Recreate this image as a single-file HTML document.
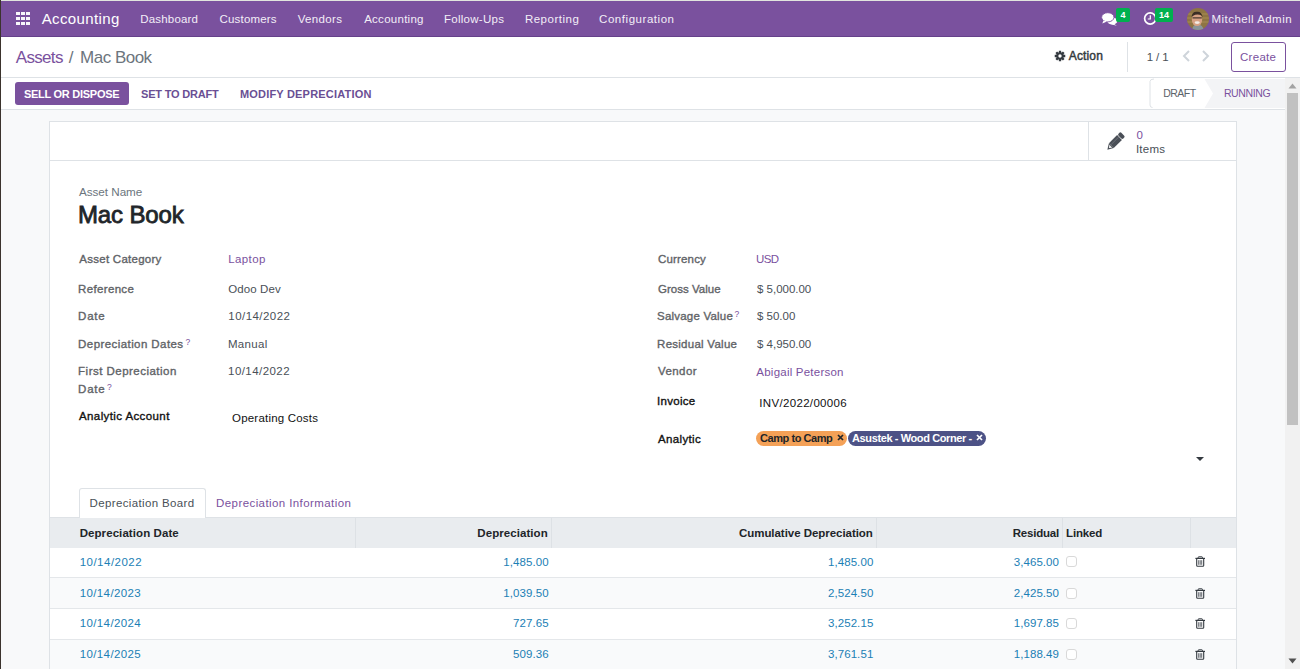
<!DOCTYPE html>
<html><head><meta charset="utf-8"><title>Mac Book - Odoo</title>
<style>
html,body{margin:0;padding:0;width:1300px;height:669px;overflow:hidden;background:#fff;}
body{position:relative;font-family:'Liberation Sans', sans-serif;}
.r,.t{position:absolute;}
.t{white-space:nowrap;}
sup{font-size:8.5px;color:#7a519e;vertical-align:top;position:relative;top:-2.5px;font-weight:400;}
.badge{background:#00b04f;color:#fff;font:700 9px/14px 'Liberation Sans', sans-serif;text-align:center;border-radius:2px;}
.tag{border-radius:8px;}
</style></head><body>
<div class="r" style="left:0px;top:0px;width:1300px;height:1px;background:#e1e4de;"></div>
<div class="r" style="left:1px;top:1px;width:1299px;height:35px;background:#7a519e;"></div>
<div class="r" style="left:1px;top:36px;width:1299px;height:1px;background:#65418a;"></div>
<div class="r" style="left:1px;top:37px;width:1299px;height:40px;background:#ffffff;"></div>
<div class="r" style="left:1px;top:77px;width:1299px;height:1px;background:#dee2e6;"></div>
<div class="r" style="left:1px;top:78px;width:1284px;height:31px;background:#ffffff;"></div>
<div class="r" style="left:1px;top:109px;width:1284px;height:1px;background:#dee2e6;"></div>
<div class="r" style="left:1px;top:110px;width:1284px;height:559px;background:#f8f9fa;"></div>
<div class="r" style="left:0px;top:0px;width:1px;height:669px;background:#3b332d;"></div>
<div class="r" style="left:16px;top:12px;width:4px;height:3.4000000000000004px;background:#ffffff;opacity:0.95"></div>
<div class="r" style="left:21px;top:12px;width:4px;height:3.4000000000000004px;background:#ffffff;opacity:0.95"></div>
<div class="r" style="left:26px;top:12px;width:4px;height:3.4000000000000004px;background:#ffffff;opacity:0.95"></div>
<div class="r" style="left:16px;top:17px;width:4px;height:3.3999999999999986px;background:#ffffff;opacity:0.95"></div>
<div class="r" style="left:21px;top:17px;width:4px;height:3.3999999999999986px;background:#ffffff;opacity:0.95"></div>
<div class="r" style="left:26px;top:17px;width:4px;height:3.3999999999999986px;background:#ffffff;opacity:0.95"></div>
<div class="r" style="left:16px;top:22px;width:4px;height:3.3999999999999986px;background:#ffffff;opacity:0.95"></div>
<div class="r" style="left:21px;top:22px;width:4px;height:3.3999999999999986px;background:#ffffff;opacity:0.95"></div>
<div class="r" style="left:26px;top:22px;width:4px;height:3.3999999999999986px;background:#ffffff;opacity:0.95"></div>
<div class="t" id="t0" style="left:41.64px;top:8px;font-size:15px;line-height:21px;color:#ffffff;font-weight:400;letter-spacing:0.400px;">Accounting</div>
<div class="t" id="t1" style="left:140.32px;top:9px;font-size:11.5px;line-height:20px;color:#f3eef7;font-weight:400;letter-spacing:0.169px;">Dashboard</div>
<div class="t" id="t2" style="left:219.49px;top:9px;font-size:11.5px;line-height:20px;color:#f3eef7;font-weight:400;letter-spacing:0.191px;">Customers</div>
<div class="t" id="t3" style="left:297.66px;top:9px;font-size:11.5px;line-height:20px;color:#f3eef7;font-weight:400;letter-spacing:0.360px;">Vendors</div>
<div class="t" id="t4" style="left:364.17px;top:9px;font-size:11.5px;line-height:20px;color:#f3eef7;font-weight:400;letter-spacing:0.270px;">Accounting</div>
<div class="t" id="t5" style="left:443.93px;top:9px;font-size:11.5px;line-height:20px;color:#f3eef7;font-weight:400;letter-spacing:0.280px;">Follow-Ups</div>
<div class="t" id="t6" style="left:524.88px;top:9px;font-size:11.5px;line-height:20px;color:#f3eef7;font-weight:400;letter-spacing:0.517px;">Reporting</div>
<div class="t" id="t7" style="left:599.10px;top:9px;font-size:11.5px;line-height:20px;color:#f3eef7;font-weight:400;letter-spacing:0.540px;">Configuration</div>
<svg class="r" style="left:1100px;top:11px" width="20" height="16" viewBox="0 0 20 16"><ellipse cx="12.3" cy="10" rx="5" ry="3.6" fill="#fff"/><path d="M13.5 12.5 L16.8 14.8 L11 13.2 Z" fill="#fff"/><ellipse cx="7.8" cy="6.3" rx="6.2" ry="4.6" fill="#fff" stroke="#7a519e" stroke-width="0.9"/><path d="M3.5 9.5 L2.3 12.6 L7 10.6 Z" fill="#fff"/></svg>
<div class="r badge" style="left:1116px;top:8px;width:14px;height:14px;">4</div>
<svg class="r" style="left:1143px;top:11px" width="15" height="15" viewBox="0 0 15 15"><circle cx="7.2" cy="7.5" r="5.6" fill="none" stroke="#fff" stroke-width="1.7"/><path d="M7.3 4.3 V8 H4.8" fill="none" stroke="#fff" stroke-width="1.2"/></svg>
<div class="r badge" style="left:1155px;top:8px;width:18px;height:14px;">14</div>
<svg class="r" style="left:1187px;top:8px" width="22" height="22" viewBox="0 0 22 22"><defs><clipPath id="cc"><circle cx="11" cy="11" r="11"/></clipPath></defs><g clip-path="url(#cc)"><rect width="22" height="22" fill="#8e7443"/><path d="M0 6 H22 M0 10 H22 M0 14 H22" stroke="#a88c55" stroke-width="1"/><path d="M5 22 Q6 16 10.5 17 Q15 16 17 22 Z" fill="#8a959a"/><ellipse cx="10" cy="11.5" rx="5.2" ry="6.6" fill="#d8a184"/><path d="M4.6 9 Q5 3.5 10 3.8 Q15 3.5 15.6 9.5 L14.5 7.5 Q10 5.5 5.8 8 Z" fill="#3b2d25"/><path d="M5.5 9.8 H14.8" stroke="#4a3a30" stroke-width="1.2"/><ellipse cx="10.2" cy="14.6" rx="2.6" ry="1.3" fill="#f4ece6"/></g></svg>
<div class="t" id="t8" style="left:1211.49px;top:9px;font-size:11.5px;line-height:20px;color:#f3eef7;font-weight:400;letter-spacing:0.457px;">Mitchell Admin</div>
<div class="t" id="t9" style="left:15.82px;top:46px;font-size:17px;line-height:24px;color:#7a519e;font-weight:400;letter-spacing:-0.684px;">Assets</div>
<div class="t" id="t10" style="left:68.78px;top:46px;font-size:17px;line-height:24px;color:#6c757d;font-weight:400;letter-spacing:0.000px;">/</div>
<div class="t" id="t11" style="left:80.10px;top:46px;font-size:17px;line-height:24px;color:#6c757d;font-weight:400;letter-spacing:-0.514px;">Mac Book</div>
<svg class="r" style="left:1054.3px;top:49.7px" width="12" height="12" viewBox="0 0 12 12"><path fill-rule="evenodd" fill="#343a40" d="M4.51 2.40 L4.85 2.27 L4.82 0.73 L7.18 0.73 L7.15 2.27 L7.49 2.40 L7.82 2.55 L8.89 1.44 L10.56 3.11 L9.45 4.18 L9.60 4.51 L9.73 4.85 L11.27 4.82 L11.27 7.18 L9.73 7.15 L9.60 7.49 L9.45 7.82 L10.56 8.89 L8.89 10.56 L7.82 9.45 L7.49 9.60 L7.15 9.73 L7.18 11.27 L4.82 11.27 L4.85 9.73 L4.51 9.60 L4.18 9.45 L3.11 10.56 L1.44 8.89 L2.55 7.82 L2.40 7.49 L2.27 7.15 L0.73 7.18 L0.73 4.82 L2.27 4.85 L2.40 4.51 L2.55 4.18 L1.44 3.11 L3.11 1.44 L4.18 2.55 Z M6 4.3 A1.7 1.7 0 1 0 6 7.7 A1.7 1.7 0 1 0 6 4.3 Z"/></svg>
<div class="t" id="t12" style="left:1068.74px;top:46px;font-size:12px;line-height:20px;color:#343a40;font-weight:400;letter-spacing:0.144px;-webkit-text-stroke:0.45px #343a40;">Action</div>
<div class="r" style="left:1127px;top:42px;width:1px;height:30px;background:#dee2e6;"></div>
<div class="t" id="t13" style="left:1146.71px;top:47px;font-size:11.5px;line-height:20px;color:#495057;font-weight:400;letter-spacing:-0.090px;">1 / 1</div>
<svg class="r" style="left:1181px;top:49px" width="32" height="14" viewBox="0 0 32 14"><path d="M8 2 L3 7 L8 12" fill="none" stroke="#ced4da" stroke-width="2"/><path d="M22 2 L27 7 L22 12" fill="none" stroke="#ced4da" stroke-width="2"/></svg>
<div class="r" style="left:1231px;top:42px;width:53px;height:28px;border:1px solid #7a519e;border-radius:3px;background:#fff"></div>
<div class="t" id="t14" style="left:1240.05px;top:47px;font-size:11.5px;line-height:20px;color:#7a519e;font-weight:400;letter-spacing:0.270px;">Create</div>
<div class="r" style="left:15px;top:82px;width:114px;height:23px;background:#7a519e;border-radius:3px"></div>
<div class="t" id="t15" style="left:23.88px;top:84px;font-size:11px;line-height:20px;color:#ffffff;font-weight:700;letter-spacing:-0.261px;">SELL OR DISPOSE</div>
<div class="t" id="t16" style="left:141.00px;top:84px;font-size:11px;line-height:20px;color:#6a4f94;font-weight:700;letter-spacing:-0.184px;">SET TO DRAFT</div>
<div class="t" id="t17" style="left:239.88px;top:84px;font-size:11px;line-height:20px;color:#6a4f94;font-weight:700;letter-spacing:0.200px;">MODIFY DEPRECIATION</div>
<svg class="r" style="left:1149px;top:78px" width="136" height="31" viewBox="0 0 136 31"><path d="M55.5 1 H136 V30 H55.5 L64 15.5 Z" fill="#f3f4f6"/><path d="M5 1 Q1 1 1 3.5 V27 Q1 29.5 3.5 29.5" fill="none" stroke="#dee2e6" stroke-width="1"/></svg>
<div class="t" id="t18" style="left:1163.26px;top:83px;font-size:10.5px;line-height:20px;color:#5c636a;font-weight:400;letter-spacing:-0.540px;">DRAFT</div>
<div class="t" id="t19" style="left:1223.89px;top:83px;font-size:10.5px;line-height:20px;color:#7a519e;font-weight:400;letter-spacing:-0.375px;">RUNNING</div>
<div class="r" style="left:1285px;top:78px;width:15px;height:591px;background:#f1f1f1;"></div>
<div class="r" style="left:1287px;top:93px;width:11px;height:332px;background:#c1c1c1;"></div>
<svg class="r" style="left:1288px;top:83px" width="9" height="6" viewBox="0 0 9 6"><path d="M0.5 5.5 L4.5 0.5 L8.5 5.5 Z" fill="#a3a3a3"/></svg>
<svg class="r" style="left:1288px;top:658px" width="9" height="6" viewBox="0 0 9 6"><path d="M0.5 0.5 L4.5 5.5 L8.5 0.5 Z" fill="#505050"/></svg>
<div class="r" style="left:49px;top:121px;width:1186px;height:600px;border:1px solid #dee2e6;background:#fff"></div>
<div class="r" style="left:50px;top:160px;width:1186px;height:1px;background:#dee2e6;"></div>
<div class="r" style="left:1088px;top:122px;width:1px;height:38px;background:#dee2e6;"></div>
<svg class="r" style="left:1103.2px;top:129.6px" width="24" height="24" viewBox="0 0 24 24"><g transform="translate(12 12) rotate(45)"><rect x="-3.4" y="-11" width="6.8" height="4" rx="1.4" fill="#4a4f57"/><rect x="-3.4" y="-6.4" width="6.8" height="11.6" fill="#4a4f57"/><path d="M-3.4 5.2 L3.4 5.2 L0 10.8 Z" fill="#4a4f57"/><path d="M-2 6 L2 6 L0 8.6 Z" fill="#f4f4f4"/><path d="M-0.9 -6 V4.8" stroke="#7b8088" stroke-width="0.6"/></g></svg>
<div class="t" id="t20" style="left:1136.60px;top:125px;font-size:11.5px;line-height:20px;color:#7a519e;font-weight:400;letter-spacing:0.000px;">0</div>
<div class="t" id="t21" style="left:1135.88px;top:139px;font-size:11.5px;line-height:20px;color:#495057;font-weight:400;letter-spacing:0.248px;">Items</div>
<div class="t" id="t22" style="left:79.00px;top:182px;font-size:11.7px;line-height:20px;color:#6c757d;font-weight:400;letter-spacing:-0.040px;">Asset Name</div>
<div class="t" id="t23" style="left:77.90px;top:198px;font-size:24px;line-height:34px;color:#212529;font-weight:400;letter-spacing:-0.129px;-webkit-text-stroke:0.8px #212529;">Mac Book</div>
<div class="t" id="t24" style="left:79.36px;top:249px;font-size:11.5px;line-height:20px;color:#5f6367;font-weight:400;letter-spacing:0.256px;-webkit-text-stroke:0.35px #5f6367;">Asset Category</div>
<div class="t" id="t25" style="left:228.27px;top:249px;font-size:11.5px;line-height:20px;color:#7a519e;font-weight:400;letter-spacing:0.378px;">Laptop</div>
<div class="t" id="t26" style="left:78.10px;top:279px;font-size:11.5px;line-height:20px;color:#5f6367;font-weight:400;letter-spacing:0.338px;-webkit-text-stroke:0.35px #5f6367;">Reference</div>
<div class="t" id="t27" style="left:228.27px;top:279px;font-size:11.5px;line-height:20px;color:#495057;font-weight:400;letter-spacing:0.090px;">Odoo Dev</div>
<div class="t" id="t28" style="left:78.10px;top:306px;font-size:11.5px;line-height:20px;color:#5f6367;font-weight:400;letter-spacing:0.750px;-webkit-text-stroke:0.35px #5f6367;">Date</div>
<div class="t" id="t29" style="left:228.36px;top:306px;font-size:11.5px;line-height:20px;color:#495057;font-weight:400;letter-spacing:0.440px;">10/14/2022</div>
<div class="t" id="t30" style="left:78.10px;top:334px;font-size:11.5px;line-height:20px;color:#5f6367;font-weight:400;letter-spacing:0.424px;-webkit-text-stroke:0.35px #5f6367;">Depreciation Dates</div>
<div class="t" id="t31" style="left:185.50px;top:334px;font-size:11.5px;line-height:20px;color:#5f6367;font-weight:400;letter-spacing:0.000px;"><sup>?</sup></div>
<div class="t" id="t32" style="left:227.88px;top:334px;font-size:11.5px;line-height:20px;color:#495057;font-weight:400;letter-spacing:0.324px;">Manual</div>
<div class="t" id="t33" style="left:78.10px;top:361px;font-size:11.5px;line-height:20px;color:#5f6367;font-weight:400;letter-spacing:0.476px;-webkit-text-stroke:0.35px #5f6367;">First Depreciation</div>
<div class="t" id="t34" style="left:78.10px;top:379px;font-size:11.5px;line-height:20px;color:#5f6367;font-weight:400;letter-spacing:0.750px;-webkit-text-stroke:0.35px #5f6367;">Date</div>
<div class="t" id="t35" style="left:107.00px;top:379px;font-size:11.5px;line-height:20px;color:#5f6367;font-weight:400;letter-spacing:0.000px;"><sup>?</sup></div>
<div class="t" id="t36" style="left:228.06px;top:361px;font-size:11.5px;line-height:20px;color:#495057;font-weight:400;letter-spacing:0.440px;">10/14/2022</div>
<div class="t" id="t37" style="left:79.00px;top:406px;font-size:11.5px;line-height:20px;color:#111;font-weight:400;letter-spacing:0.396px;-webkit-text-stroke:0.35px #111;">Analytic Account</div>
<div class="t" id="t38" style="left:232.00px;top:408px;font-size:11.5px;line-height:20px;color:#111;font-weight:400;letter-spacing:0.206px;">Operating Costs</div>
<div class="t" id="t39" style="left:658.00px;top:249px;font-size:11.5px;line-height:20px;color:#5f6367;font-weight:400;letter-spacing:0.167px;-webkit-text-stroke:0.35px #5f6367;">Currency</div>
<div class="t" id="t40" style="left:756.10px;top:249px;font-size:11.5px;line-height:20px;color:#7a519e;font-weight:400;letter-spacing:-0.630px;">USD</div>
<div class="t" id="t41" style="left:658.00px;top:279px;font-size:11.5px;line-height:20px;color:#5f6367;font-weight:400;letter-spacing:0.018px;-webkit-text-stroke:0.35px #5f6367;">Gross Value</div>
<div class="t" id="t42" style="left:757.00px;top:279px;font-size:11.5px;line-height:20px;color:#495057;font-weight:400;letter-spacing:-0.010px;">$ 5,000.00</div>
<div class="t" id="t43" style="left:657.10px;top:306px;font-size:11.5px;line-height:20px;color:#5f6367;font-weight:400;letter-spacing:0.202px;-webkit-text-stroke:0.35px #5f6367;">Salvage Value</div>
<div class="t" id="t44" style="left:734.50px;top:306px;font-size:11.5px;line-height:20px;color:#5f6367;font-weight:400;letter-spacing:0.000px;"><sup>?</sup></div>
<div class="t" id="t45" style="left:757.00px;top:306px;font-size:11.5px;line-height:20px;color:#495057;font-weight:400;letter-spacing:-0.015px;">$ 50.00</div>
<div class="t" id="t46" style="left:657.10px;top:334px;font-size:11.5px;line-height:20px;color:#5f6367;font-weight:400;letter-spacing:0.256px;-webkit-text-stroke:0.35px #5f6367;">Residual Value</div>
<div class="t" id="t47" style="left:757.00px;top:334px;font-size:11.5px;line-height:20px;color:#495057;font-weight:400;letter-spacing:-0.010px;">$ 4,950.00</div>
<div class="t" id="t48" style="left:658.00px;top:361px;font-size:11.5px;line-height:20px;color:#5f6367;font-weight:400;letter-spacing:0.432px;-webkit-text-stroke:0.35px #5f6367;">Vendor</div>
<div class="t" id="t49" style="left:756.37px;top:362px;font-size:11.5px;line-height:20px;color:#7a519e;font-weight:400;letter-spacing:0.222px;">Abigail Peterson</div>
<div class="t" id="t50" style="left:657.10px;top:391px;font-size:11.5px;line-height:20px;color:#111;font-weight:400;letter-spacing:0.270px;-webkit-text-stroke:0.35px #111;">Invoice</div>
<div class="t" id="t51" style="left:759.32px;top:393px;font-size:11.5px;line-height:20px;color:#111;font-weight:400;letter-spacing:0.325px;">INV/2022/00006</div>
<div class="t" id="t52" style="left:658.00px;top:428.5px;font-size:11.5px;line-height:20px;color:#111;font-weight:400;letter-spacing:0.360px;-webkit-text-stroke:0.35px #111;">Analytic</div>
<div class="r tag" style="left:756px;top:431px;width:91px;height:15px;background:#f4a157"></div>
<div class="r tag" style="left:848px;top:431px;width:138px;height:15px;background:#4d5286"></div>
<div class="t" id="t53" style="left:760.05px;top:427.5px;font-size:11px;line-height:20px;color:#212529;font-weight:700;letter-spacing:-0.450px;">Camp to Camp</div>
<div class="t" id="t54" style="left:0.00px;top:-13px;font-size:9px;line-height:20px;color:#212529;font-weight:400;letter-spacing:0.000px;"></div>
<svg class="r" style="left:837px;top:434.3px" width="7" height="7" viewBox="0 0 7 7"><path d="M1 1 L6 6 M6 1 L1 6" stroke="#212529" stroke-width="1.7"/></svg>
<div class="t" id="t55" style="left:852.05px;top:427.5px;font-size:11px;line-height:20px;color:#ffffff;font-weight:700;letter-spacing:-0.389px;">Asustek - Wood Corner -</div>
<div class="t" id="t56" style="left:0.00px;top:-13px;font-size:9px;line-height:20px;color:#212529;font-weight:400;letter-spacing:0.000px;"></div>
<svg class="r" style="left:976px;top:434.3px" width="7" height="7" viewBox="0 0 7 7"><path d="M1 1 L6 6 M6 1 L1 6" stroke="#ffffff" stroke-width="1.7"/></svg>
<svg class="r" style="left:1196px;top:457px" width="8" height="4" viewBox="0 0 8 4"><path d="M0 0 H8 L4 4 Z" fill="#343a40"/></svg>
<div class="r" style="left:50px;top:517px;width:1186px;height:1px;background:#dee2e6;"></div>
<div class="r" style="left:79px;top:488px;width:125px;height:30px;border:1px solid #dee2e6;border-bottom:none;border-radius:3px 3px 0 0;background:#fff"></div>
<div class="t" id="t57" style="left:89.54px;top:493px;font-size:11.5px;line-height:20px;color:#495057;font-weight:400;letter-spacing:0.360px;">Depreciation Board</div>
<div class="t" id="t58" style="left:216.10px;top:493px;font-size:11.5px;line-height:20px;color:#7a519e;font-weight:400;letter-spacing:0.411px;">Depreciation Information</div>
<div class="r" style="left:50px;top:518px;width:1186px;height:30px;background:#e9ecef;"></div>
<div class="r" style="left:355px;top:518px;width:1px;height:30px;background:#dde1e5;"></div>
<div class="r" style="left:551px;top:518px;width:1px;height:30px;background:#dde1e5;"></div>
<div class="r" style="left:876px;top:518px;width:1px;height:30px;background:#dde1e5;"></div>
<div class="r" style="left:1062px;top:518px;width:1px;height:30px;background:#dde1e5;"></div>
<div class="r" style="left:1190px;top:518px;width:1px;height:30px;background:#dde1e5;"></div>
<div class="t" id="t59" style="left:79.66px;top:523px;font-size:11.5px;line-height:20px;color:#212529;font-weight:700;letter-spacing:0.079px;">Depreciation Date</div>
<div class="t" id="t60" style="right:752.22px;top:523px;font-size:11.5px;line-height:20px;color:#212529;font-weight:700;letter-spacing:0.065px;">Depreciation</div>
<div class="t" id="t61" style="right:427.22px;top:523px;font-size:11.5px;line-height:20px;color:#212529;font-weight:700;letter-spacing:-0.045px;">Cumulative Depreciation</div>
<div class="t" id="t62" style="right:241.00px;top:523px;font-size:11.5px;line-height:20px;color:#212529;font-weight:700;letter-spacing:-0.206px;">Residual</div>
<div class="t" id="t63" style="left:1066.10px;top:523px;font-size:11.5px;line-height:20px;color:#212529;font-weight:700;letter-spacing:-0.180px;">Linked</div>
<div class="r" style="left:50px;top:548px;width:1186px;height:29px;background:#ffffff;"></div>
<div class="r" style="left:50px;top:577px;width:1186px;height:1px;background:#e4e7ea;"></div>
<div class="t" id="t64" style="left:79.66px;top:552px;font-size:11.5px;line-height:20px;color:#1b80b5;font-weight:400;letter-spacing:0.490px;">10/14/2022</div>
<div class="t" id="t65" style="right:751.27px;top:552px;font-size:11.5px;line-height:20px;color:#1b80b5;font-weight:400;letter-spacing:0.077px;">1,485.00</div>
<div class="t" id="t66" style="right:426.61px;top:552px;font-size:11.5px;line-height:20px;color:#1b80b5;font-weight:400;letter-spacing:0.090px;">1,485.00</div>
<div class="t" id="t67" style="right:241.00px;top:552px;font-size:11.5px;line-height:20px;color:#1b80b5;font-weight:400;letter-spacing:0.051px;">3,465.00</div>
<div class="r" style="left:1066px;top:556px;width:9px;height:9px;border:1px solid #d9d9d9;border-radius:3px;background:#fff"></div>
<svg class="r" style="left:1195px;top:556px" width="11" height="11" viewBox="0 0 11 11"><rect x="0.4" y="1.8" width="9.6" height="1.2" fill="#343a40"/><path d="M3.2 2 V1.3 Q3.2 0.8 3.7 0.8 H6.9 Q7.4 0.8 7.4 1.3 V2" fill="none" stroke="#343a40" stroke-width="1"/><path d="M1.7 2.9 V9.5 Q1.7 10.3 2.5 10.3 H7.9 Q8.7 10.3 8.7 9.5 V2.9" fill="none" stroke="#343a40" stroke-width="1.1"/><path d="M3.7 4.2 V8.8 M5.2 4.2 V8.8 M6.7 4.2 V8.8" stroke="#343a40" stroke-width="0.75"/></svg>
<div class="r" style="left:50px;top:578px;width:1186px;height:30px;background:#f9fafb;"></div>
<div class="r" style="left:50px;top:608px;width:1186px;height:1px;background:#e4e7ea;"></div>
<div class="t" id="t68" style="left:79.66px;top:583.4px;font-size:11.5px;line-height:20px;color:#1b80b5;font-weight:400;letter-spacing:0.390px;">10/14/2023</div>
<div class="t" id="t69" style="right:751.27px;top:583.4px;font-size:11.5px;line-height:20px;color:#1b80b5;font-weight:400;letter-spacing:0.077px;">1,039.50</div>
<div class="t" id="t70" style="right:426.61px;top:583.4px;font-size:11.5px;line-height:20px;color:#1b80b5;font-weight:400;letter-spacing:0.090px;">2,524.50</div>
<div class="t" id="t71" style="right:241.00px;top:583.4px;font-size:11.5px;line-height:20px;color:#1b80b5;font-weight:400;letter-spacing:0.051px;">2,425.50</div>
<div class="r" style="left:1066px;top:588px;width:9px;height:9px;border:1px solid #d9d9d9;border-radius:3px;background:#fff"></div>
<svg class="r" style="left:1195px;top:588px" width="11" height="11" viewBox="0 0 11 11"><rect x="0.4" y="1.8" width="9.6" height="1.2" fill="#343a40"/><path d="M3.2 2 V1.3 Q3.2 0.8 3.7 0.8 H6.9 Q7.4 0.8 7.4 1.3 V2" fill="none" stroke="#343a40" stroke-width="1"/><path d="M1.7 2.9 V9.5 Q1.7 10.3 2.5 10.3 H7.9 Q8.7 10.3 8.7 9.5 V2.9" fill="none" stroke="#343a40" stroke-width="1.1"/><path d="M3.7 4.2 V8.8 M5.2 4.2 V8.8 M6.7 4.2 V8.8" stroke="#343a40" stroke-width="0.75"/></svg>
<div class="r" style="left:50px;top:609px;width:1186px;height:30px;background:#ffffff;"></div>
<div class="r" style="left:50px;top:639px;width:1186px;height:1px;background:#e4e7ea;"></div>
<div class="t" id="t72" style="left:79.66px;top:613.4px;font-size:11.5px;line-height:20px;color:#1b80b5;font-weight:400;letter-spacing:0.390px;">10/14/2024</div>
<div class="t" id="t73" style="right:751.27px;top:613.4px;font-size:11.5px;line-height:20px;color:#1b80b5;font-weight:400;letter-spacing:0.077px;">727.65</div>
<div class="t" id="t74" style="right:426.61px;top:613.4px;font-size:11.5px;line-height:20px;color:#1b80b5;font-weight:400;letter-spacing:0.090px;">3,252.15</div>
<div class="t" id="t75" style="right:241.00px;top:613.4px;font-size:11.5px;line-height:20px;color:#1b80b5;font-weight:400;letter-spacing:0.051px;">1,697.85</div>
<div class="r" style="left:1066px;top:618px;width:9px;height:9px;border:1px solid #d9d9d9;border-radius:3px;background:#fff"></div>
<svg class="r" style="left:1195px;top:618px" width="11" height="11" viewBox="0 0 11 11"><rect x="0.4" y="1.8" width="9.6" height="1.2" fill="#343a40"/><path d="M3.2 2 V1.3 Q3.2 0.8 3.7 0.8 H6.9 Q7.4 0.8 7.4 1.3 V2" fill="none" stroke="#343a40" stroke-width="1"/><path d="M1.7 2.9 V9.5 Q1.7 10.3 2.5 10.3 H7.9 Q8.7 10.3 8.7 9.5 V2.9" fill="none" stroke="#343a40" stroke-width="1.1"/><path d="M3.7 4.2 V8.8 M5.2 4.2 V8.8 M6.7 4.2 V8.8" stroke="#343a40" stroke-width="0.75"/></svg>
<div class="r" style="left:50px;top:640px;width:1186px;height:29px;background:#f9fafb;"></div>
<div class="r" style="left:50px;top:669px;width:1186px;height:1px;background:#e4e7ea;"></div>
<div class="t" id="t76" style="left:79.66px;top:644.3px;font-size:11.5px;line-height:20px;color:#1b80b5;font-weight:400;letter-spacing:0.390px;">10/14/2025</div>
<div class="t" id="t77" style="right:751.27px;top:644.3px;font-size:11.5px;line-height:20px;color:#1b80b5;font-weight:400;letter-spacing:0.077px;">509.36</div>
<div class="t" id="t78" style="right:426.61px;top:644.3px;font-size:11.5px;line-height:20px;color:#1b80b5;font-weight:400;letter-spacing:0.090px;">3,761.51</div>
<div class="t" id="t79" style="right:241.00px;top:644.3px;font-size:11.5px;line-height:20px;color:#1b80b5;font-weight:400;letter-spacing:0.051px;">1,188.49</div>
<div class="r" style="left:1066px;top:649px;width:9px;height:9px;border:1px solid #d9d9d9;border-radius:3px;background:#fff"></div>
<svg class="r" style="left:1195px;top:649px" width="11" height="11" viewBox="0 0 11 11"><rect x="0.4" y="1.8" width="9.6" height="1.2" fill="#343a40"/><path d="M3.2 2 V1.3 Q3.2 0.8 3.7 0.8 H6.9 Q7.4 0.8 7.4 1.3 V2" fill="none" stroke="#343a40" stroke-width="1"/><path d="M1.7 2.9 V9.5 Q1.7 10.3 2.5 10.3 H7.9 Q8.7 10.3 8.7 9.5 V2.9" fill="none" stroke="#343a40" stroke-width="1.1"/><path d="M3.7 4.2 V8.8 M5.2 4.2 V8.8 M6.7 4.2 V8.8" stroke="#343a40" stroke-width="0.75"/></svg>
</body></html>
